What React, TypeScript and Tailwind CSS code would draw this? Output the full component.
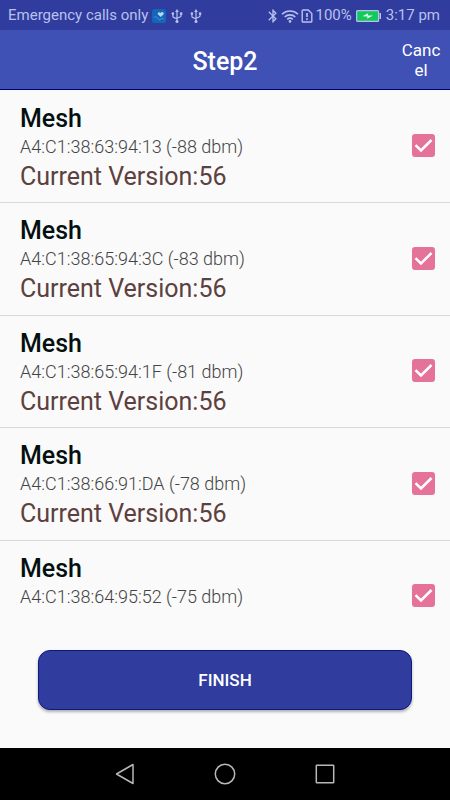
import { useState } from 'react';
import { MdBluetooth } from 'react-icons/md';

const devices = [
  { address: 'A4:C1:38:63:94:13', rssi: -88, version: '56' },
  { address: 'A4:C1:38:65:94:3C', rssi: -83, version: '56' },
  { address: 'A4:C1:38:65:94:1F', rssi: -81, version: '56' },
  { address: 'A4:C1:38:66:91:DA', rssi: -78, version: '56' },
  { address: 'A4:C1:38:64:95:52', rssi: -75, version: null },
];

function HealthIcon() {
  return (
    <svg viewBox="0 0 14 14" className="size-3.5" aria-hidden="true">
      <rect width="14" height="14" rx="2.5" fill="#1565b8" />
      <path d="M8.8 8 6 5.600C4.900 3.800 7 2.300 8.500 3.900 9.600 2.200 12.200 3 11.600 5.200Z" fill="#bcd4f4" />
      <path d="M2 8.500 4 7.500 6 9.800 7.800 11 9.500 9.500 11.800 10" fill="none" stroke="#4d96dc" strokeWidth="0.9" />
    </svg>
  );
}

function UsbIcon() {
  return (
    <svg viewBox="0 0 12 14" className="h-3.5 w-3" fill="currentColor" aria-hidden="true">
      <path d="M6 2v10M1.900 4.500V7.200Q1.900 8.300 3 8.600L6 9.700M10.100 4.500V6.500Q10.100 7.600 9 8L6 9.200" fill="none" stroke="currentColor" strokeWidth="1.200" />
      <path d="M6 0 7.900 2.900H4.100Z" />
      <circle cx="1.900" cy="4.600" r="1.300" />
      <path d="M8.900 3.400h2.400v2.400H8.900z" />
      <circle cx="6" cy="12.400" r="1.500" />
    </svg>
  );
}

function WifiIcon() {
  return (
    <svg viewBox="0 0 18 14" className="h-3.5 w-[18px]" fill="none" stroke="currentColor" strokeWidth="1.6" aria-hidden="true">
      <path d="M1 5.200a11.500 11.500 0 0 1 16 0M3.700 8a7.600 7.600 0 0 1 10.600 0M6.200 10.400a4.200 4.200 0 0 1 5.600 0" />
      <circle cx="9" cy="12.400" r="1.300" fill="currentColor" stroke="none" />
    </svg>
  );
}

function SimAlertIcon() {
  return (
    <svg viewBox="0 0 12 14" className="h-3.5 w-3" fill="none" stroke="currentColor" strokeWidth="1.4" aria-hidden="true">
      <path d="M1.200 1.700Q1.200 1 2 1H7.200L10.800 4.600V12.200Q10.800 13 10 13H2Q1.200 13 1.200 12.200Z" />
      <path d="M6 4v4M6 9.300v1.700" strokeWidth="1.700" />
    </svg>
  );
}

function BatteryIcon() {
  return (
    <svg viewBox="0 0 26 12" className="h-3 w-[26px]" aria-hidden="true">
      <rect x="0.600" y="0.600" width="22" height="10.800" rx="1" fill="#12c95c" stroke="#b9c1ee" strokeWidth="1.200" />
      <path d="M23.500 3h1.500v6h-1.500z" fill="#b9c1ee" />
      <path d="M6.500 6.200 12.200 3.200 11.700 5.400 17 5.600 11 8.800 11.600 6.500Z" fill="#e6ffe9" />
    </svg>
  );
}

function StatusBar() {
  return (
    <div className="flex h-[30px] shrink-0 items-center justify-between bg-[#303c9e] pl-2 pr-[10px] pt-px text-[15px] text-[#b9c1ee]">
      <div className="flex items-center">
        <span className="mr-1">Emergency calls only</span>
        <HealthIcon />
        <span className="ml-[5px] flex gap-[7px]">
          <UsbIcon />
          <UsbIcon />
        </span>
      </div>
      <div className="flex items-center">
        <MdBluetooth className="size-4" />
        <WifiIcon />
        <span className="ml-0.5"><SimAlertIcon /></span>
        <span className="ml-0.5">100%</span>
        <span className="ml-1"><BatteryIcon /></span>
        <span className="ml-1">3:17 pm</span>
      </div>
    </div>
  );
}

export default function App() {
  const [checked, setChecked] = useState<boolean[]>(devices.map(() => true));

  const toggle = (index: number) => {
    setChecked(checked.map((value, i) => (i === index ? !value : value)));
  };

  return (
    <div className="flex h-screen flex-col bg-[#fafafa] font-['Roboto',sans-serif]">
      <StatusBar />

      <header className="grid h-[60px] shrink-0 grid-cols-[1fr_auto_1fr] items-center border-b border-[#00006e] bg-[#3f51b5] text-white">
        <h1 className="col-start-2 pt-1 text-[25px] font-medium">Step2</h1>
        <button className="w-[58px] justify-self-end break-all px-2 text-[17px] leading-5">Cancel</button>
      </header>

      {/* Device list */}
      <ul className="min-h-0 flex-1 overflow-y-auto [scrollbar-width:none]">
        {devices.map((device, index) => (
          <li key={device.address} className="h-28 border-t border-[#d8d8d8] first:border-transparent even:h-[113px]">
            <label className="flex h-full justify-between pl-5 pr-[15px]">
              <span className="flex flex-col pt-3">
                <span className="text-[25px] font-medium leading-8 text-[#041010]">Mesh</span>
                <span className="text-lg font-light leading-6 text-[#444]">
                  {device.address} ({device.rssi} dbm)
                </span>
                {device.version && (
                  <span className="text-[25px] leading-9 text-[#5d4040]">Current Version:{device.version}</span>
                )}
              </span>
              <span className="mb-0.5 grid self-center">
                <input
                  type="checkbox"
                  checked={checked[index]}
                  onChange={() => toggle(index)}
                  className="col-start-1 row-start-1 size-[23px] appearance-none rounded-[3px] border-2 border-[#e57399] checked:bg-[#e57399]"
                />
                {checked[index] && (
                  <svg viewBox="0 0 23 23" className="pointer-events-none col-start-1 row-start-1 size-[23px]" aria-hidden="true">
                    <path d="M3.500 11.200 9 16.500 19.500 6" fill="none" stroke="#fff" strokeWidth="2.500" />
                  </svg>
                )}
              </span>
            </label>
          </li>
        ))}
      </ul>

      <div className="shrink-0 px-[38px] pb-[38px] pt-9">
        <button className="h-[60px] w-full rounded-xl border border-[#10187e] bg-[#303c9e] pt-0.5 text-[17px] font-medium text-white shadow-[0_2px_3px_rgba(0,0,0,0.3)]">
          FINISH
        </button>
      </div>

      {/* System navigation */}
      <nav className="flex h-[52px] shrink-0 items-center justify-center gap-[76px] bg-black text-[#b8b8b8]">
        <button aria-label="Back">
          <svg viewBox="0 0 24 24" className="size-6" fill="none" stroke="currentColor" strokeWidth="1.500" strokeLinejoin="round">
            <path d="M20 2.500V21.500L3.500 12Z" />
          </svg>
        </button>
        <button aria-label="Home">
          <svg viewBox="0 0 24 24" className="size-6" fill="none" stroke="currentColor" strokeWidth="1.500">
            <circle cx="12" cy="12" r="9.700" />
          </svg>
        </button>
        <button aria-label="Recent apps">
          <svg viewBox="0 0 24 24" className="size-6" fill="none" stroke="currentColor" strokeWidth="1.500">
            <rect x="3.300" y="3.300" width="17.400" height="17.400" rx="0.500" />
          </svg>
        </button>
      </nav>
    </div>
  );
}
